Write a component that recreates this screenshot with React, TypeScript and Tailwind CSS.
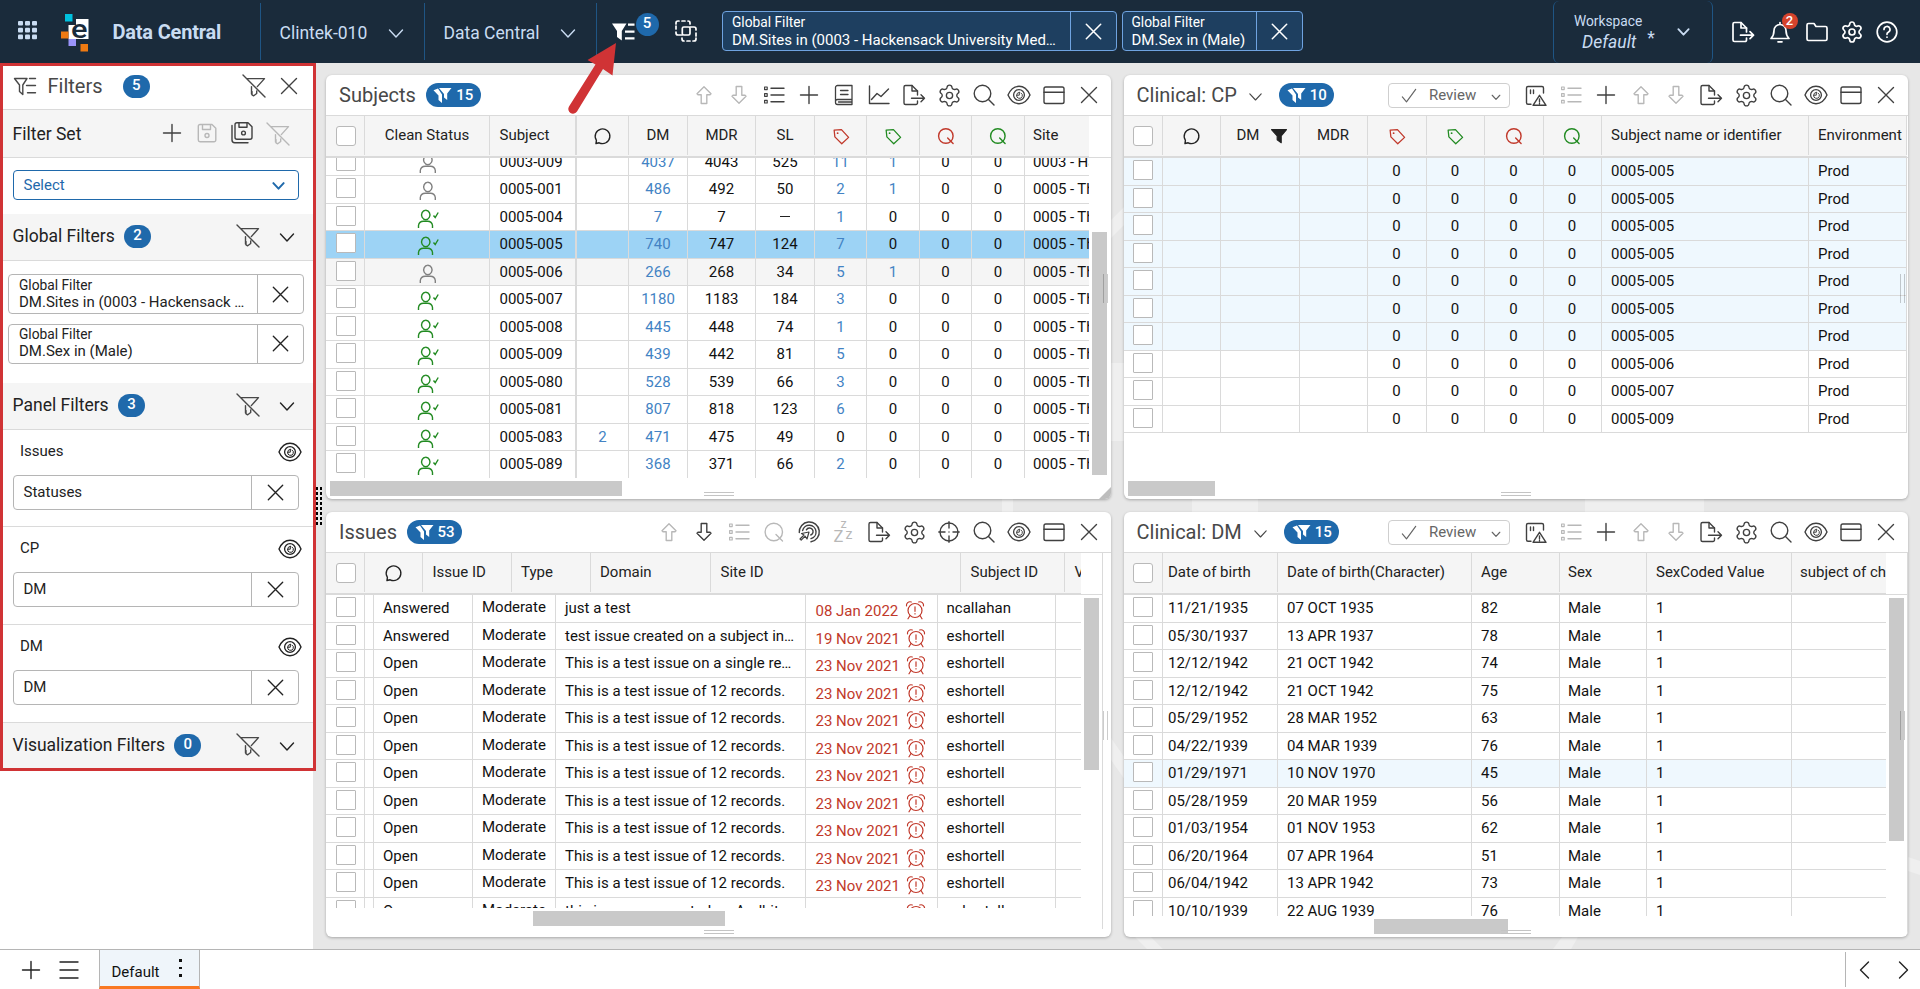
import type { ReactNode } from "react";
import clsx from "clsx";
import { Settings } from "lucide-react";

type IconProps = { className?: string; size?: number; stroke?: number; box?: string; children?: ReactNode };

function Icon({ className, size = 24, stroke = 1.4, box = "0 0 24 24", children }: IconProps) {
  return (
    <svg
      width={size}
      height={size}
      viewBox={box}
      fill="none"
      stroke="currentColor"
      strokeWidth={stroke}
      strokeLinecap="round"
      strokeLinejoin="round"
      className={clsx("shrink-0", className)}
    >
      {children}
    </svg>
  );
}

const CloseIcon = (p: IconProps) => (
  <Icon {...p}>
    <path d="M4.5 4.500l15 15M19.500 4.500l-15 15" />
  </Icon>
);
const PlusIcon = (p: IconProps) => (
  <Icon {...p}>
    <path d="M12 3.500v17M3.500 12h17" />
  </Icon>
);
const ChevronDown = (p: IconProps) => (
  <Icon {...p}>
    <path d="M5.500 9l6.500 7 6.500-7" />
  </Icon>
);
const UpIcon = (p: IconProps) => (
  <Icon {...p}>
    <path d="M12 3.700l7 7-1 1h-3.200v8.800H9.200v-8.800H6l-1-1z" />
  </Icon>
);
const DownIcon = (p: IconProps) => (
  <Icon {...p}>
    <path d="M12 20.300l7-7-1-1h-3.200V3.500H9.200v8.800H6l-1 1z" />
  </Icon>
);
const ListIcon = (p: IconProps) => (
  <Icon {...p}>
    <path d="M9 5.300h13M9 12h13M9 18.700h13" />
    <path d="M2.600 4h2.600v2.600H2.600zM2.600 10.700h2.600v2.600H2.600zM2.600 17.400h2.600V20H2.600z" strokeWidth="1.200" />
  </Icon>
);
const BookIcon = (p: IconProps) => (
  <Icon {...p}>
    <path d="M20 16.500V2.500H5.500a2 2 0 0 0-2 2v15a2 2 0 0 0 2 2H20v-5H5.500a2 2 0 0 0-2 2M8.500 7.500H16M8.500 11.500H16M6.500 19h13" strokeWidth="1.300" />
  </Icon>
);
const ChartIcon = (p: IconProps) => (
  <Icon {...p}>
    <path d="M2.500 3v17.500H22M4.500 16.500l5.500-6 4 3 7.500-7.500" />
  </Icon>
);
const ExportIcon = (p: IconProps) => (
  <Icon {...p}>
    <path d="M15.500 18v2a1.500 1.500 0 0 1-1.500 1.500H3.500A1.500 1.500 0 0 1 2 20V4a1.500 1.500 0 0 1 1.500-1.500H10l5.500 5.500v4" />
    <path d="M10 2.500V8h5.500M9.500 15.200H22.500M19 11.700l3.500 3.500-3.500 3.500" />
  </Icon>
);
const SearchIcon = (p: IconProps) => (
  <Icon {...p}>
    <circle cx="10.500" cy="10.500" r="8.300" />
    <path d="M16.500 16.500l5.500 5.500" />
  </Icon>
);
const EyeIcon = (p: IconProps) => (
  <Icon {...p}>
    <path d="M1 12c2-4.500 5.500-8.700 11-8.700S21 7.500 23 12c-2 4.500-5.500 8.700-11 8.700S3 16.500 1 12z" />
    <circle cx="12" cy="12" r="5.400" strokeWidth="1.300" />
    <path d="M12.300 9.300v2.900H9.600a2.900 2.900 0 1 0 4.400-2.200M9.600 12.200a2.900 2.900 0 0 1 2.700-2.900" strokeWidth="1" />
  </Icon>
);
const CardIcon = (p: IconProps) => (
  <Icon {...p}>
    <rect x="2" y="4" width="20" height="16.500" rx="1.800" />
    <path d="M2 9.300h20" />
  </Icon>
);
const QueryIcon = (p: IconProps) => (
  <Icon {...p}>
    <circle cx="11.800" cy="12" r="8.700" />
    <path d="M14 14.500l6.500 6.500" />
  </Icon>
);
const RetargetIcon = (p: IconProps) => (
  <Icon {...p}>
    <path d="M2.300 12.500A10 10 0 1 1 14 21.800M5.600 10.500A6.800 6.800 0 1 1 14 18.600M9.400 9.800A3.600 3.600 0 1 1 13.800 15" />
    <path d="M12 12l-2 7-1.800-2.800-4 4-1.200-1.200 4-4-2.500-1.500z" strokeWidth="1.200" />
  </Icon>
);
const CrosshairIcon = (p: IconProps) => (
  <Icon {...p}>
    <circle cx="12" cy="12" r="9" />
    <path d="M12 1.800V8M12 16v6.200M1.800 12H8M16 12h6.200M12 11.900v.2" />
  </Icon>
);
const SnoozeIcon = (p: IconProps) => (
  <Icon {...p}>
    <g fill="currentColor" stroke="none">
      <text x="8.500" y="8.200" fontSize="12.500">z</text>
      <text x="1.500" y="21.500" fontSize="16.500">Z</text>
      <text x="13.500" y="18.500" fontSize="14">z</text>
    </g>
  </Icon>
);
const WarnNoteIcon = (p: IconProps) => (
  <Icon {...p}>
    <path d="M7 21.300H4A1.500 1.500 0 0 1 2.500 19.800V5A1.500 1.500 0 0 1 4 3.500h14A1.500 1.500 0 0 1 19.500 5v5M6.500 7v3.500M9.500 7v3.500" />
    <path d="M15.500 12.300L22 22.300H9z M15.500 16v3M15.500 20.500v.2" />
  </Icon>
);
const FilterOffIcon = (p: IconProps) => (
  <Icon {...p}>
    <path d="M1 1l22 22M5 4.600h17.500l-7.200 8M9.500 12.600v7.400M14.700 17v2.500l-3 2.300-1.700-1v-3.300" />
  </Icon>
);
const FilterListIcon = (p: IconProps) => (
  <Icon {...p}>
    <path d="M1.500 4.500h12.500L9.800 11v9.500l-3.300-3V11zM16.500 4.500H22.500M13.500 11.500h9M14.500 18.800h8" />
  </Icon>
);
const SaveIcon = (p: IconProps) => (
  <Icon {...p}>
    <path d="M5 3.500h12l3.800 3.800V19A1.700 1.700 0 0 1 19 20.700H5A1.700 1.700 0 0 1 3.300 19V5.200A1.700 1.700 0 0 1 5 3.500zM7.500 3.700V8.500h8V3.700" />
    <circle cx="12" cy="14.500" r="2" />
  </Icon>
);
const SaveCopyIcon = (p: IconProps) => (
  <Icon {...p}>
    <path d="M7 1.800h11l4 4v10.500a2 2 0 0 1-2 2H7a2 2 0 0 1-2-2V3.800a2 2 0 0 1 2-2zM9 2v4.300h8V2M2 4.500v14.500a2.700 2.700 0 0 0 2.700 2.700H18" />
    <circle cx="13.500" cy="12" r="1.900" />
  </Icon>
);
const CommentIcon = (p: IconProps) => (
  <Icon {...p}>
    <path d="M5.400 20.200l.5-3.500a8 8 0 1 1 3 2.700z" />
  </Icon>
);
const TagIcon = (p: IconProps) => (
  <Icon {...p}>
    <path d="M4.500 5.500l.8 7.500 7.500 7.500 7.500-7L12.500 5z" />
    <path d="M8.300 8.800v.1" strokeWidth="2" />
  </Icon>
);
const SolidFunnel = (p: IconProps) => (
  <Icon {...p}>
    <path d="M2 3.500h20l-7 8.500v9l-5.500-4V12z" fill="currentColor" />
  </Icon>
);
const DoubleFunnel = () => (
  <svg width="19" height="17" viewBox="0 0 19 17" fill="currentColor" className="shrink-0">
    <path d="M0.500 3.300L5 1.500l4 6V16L5.500 13V8.500z" />
    <path d="M6 1h12.500l-4.300 5.500V13L11 10.500V7z" />
  </svg>
);
const AlarmIcon = () => (
  <Icon size={20} box="0 0 20 20" className="text-[#c1392b]" stroke={1.2}>
    <circle cx="10" cy="10.500" r="7" />
    <path d="M10 6.800v4.500M10 13.600v.3M5 15.500L3 18.800M15 15.500l2 3.300M1.500 5.800C1 3.500 3.500 1 6.300 2M18.500 5.800C19 3.500 16.500 1 13.700 2" />
  </Icon>
);
const PersonIcon = ({ clean }: { clean?: boolean }) => (
  <svg
    width="22"
    height="20"
    viewBox="0 0 22 20"
    fill="none"
    stroke="currentColor"
    strokeWidth="1.400"
    className={clean ? "ml-0.5 mt-1 text-[#228b22]" : "ml-0.5 mt-1 text-[#808080]"}
  >
    {clean ? (
      <path d="M1.500 19v-2.500a5 5 0 0 1 5-4.300h4a5 5 0 0 1 5 4.300V19M8.700 1.200a4.200 4.700 0 1 0 .1 0M16.500 6.500l1.700 2 3-5" />
    ) : (
      <path d="M3.300 19v-2.500a5 5 0 0 1 5-4.300h5a5 5 0 0 1 5 4.300V19M10.800 1.200a4.200 4.700 0 1 0 .1 0" />
    )}
  </svg>
);

const CountPill = ({ value }: { value: number }) => (
  <span className="flex h-[23.500px] w-[55px] items-center justify-center gap-1 rounded-full bg-[#1f69ab] text-[15px] font-medium text-white">
    <DoubleFunnel />
    {value}
  </span>
);

const Badge = ({ value, className }: { value: number; className?: string }) => (
  <span
    className={clsx(
      "flex h-[23px] w-[27.500px] items-center justify-center rounded-full bg-[#1f69ab] pb-px text-[15px] font-medium text-white",
      className,
    )}
  >
    {value}
  </span>
);

const Checkbox = ({ header }: { header?: boolean }) => (
  <span className={clsx("size-5 border border-[#b9b9b9] bg-white", header ? "rounded-[3px]" : "mb-0.5 rounded-[1px]")} />
);

type Column = { w: string; align?: "left"; pad?: string; thick?: boolean };

function Cell({ col, header, children }: { col: Column; header?: boolean; children?: ReactNode }) {
  return (
    <div
      className={clsx(
        "flex h-full shrink-0 items-center overflow-hidden whitespace-nowrap border-[#dadada]",
        col.w,
        col.thick ? "border-r-2" : "border-r",
        col.align === "left" ? clsx("justify-start", col.pad ?? "pl-[9.500px]") : "justify-center",
        header && "text-[#222]",
      )}
    >
      {children}
    </div>
  );
}

function HeaderRow({ cols, labels, width }: { cols: Column[]; labels: ReactNode[]; width: string }) {
  return (
    <div className="flex h-[42px] shrink-0">
      <div className={clsx("flex shrink-0 overflow-hidden border-b-2 border-[#dadada] bg-[#f5f5f5] pb-px", width)}>
        {cols.map((col, i) => (
          <Cell key={i} col={col} header>
            {i === 0 ? <Checkbox header /> : labels[i - 1]}
          </Cell>
        ))}
      </div>
      <div className="grow border-b border-[#dadada]" />
    </div>
  );
}

function Row({ cols, cells, className }: { cols: Column[]; cells: ReactNode[]; className?: string }) {
  return (
    <div className={clsx("flex h-[27.500px] w-max items-center border-b border-[#dadada]", className)}>
      {cols.map((col, i) => (
        <Cell key={i} col={col}>
          {i === 0 ? <Checkbox /> : cells[i - 1]}
        </Cell>
      ))}
    </div>
  );
}

const tools: Record<string, (p: IconProps) => ReactNode> = {
  up: UpIcon,
  down: DownIcon,
  list: ListIcon,
  plus: PlusIcon,
  book: BookIcon,
  chart: ChartIcon,
  export: ExportIcon,
  gear: (p) => <Settings size={25} strokeWidth={1.3} className={p.className} />,
  search: SearchIcon,
  eye: EyeIcon,
  card: CardIcon,
  close: CloseIcon,
  query: QueryIcon,
  retarget: RetargetIcon,
  snooze: SnoozeIcon,
  target: CrosshairIcon,
  warn: WarnNoteIcon,
};

type PanelProps = {
  title: string;
  count: number;
  icons: string[];
  dropdown?: boolean;
  className: string;
  children: ReactNode;
};

// A leading "-" marks a disabled tool.
function Panel({ title, count, icons, dropdown, className, children }: PanelProps) {
  return (
    <section className={clsx("relative flex flex-col overflow-hidden rounded-md bg-white shadow-[0_1px_3px_rgba(0,0,0,0.28)]", className)}>
      <div className="flex h-[41px] shrink-0 items-center border-b border-[#dadada] pl-[13px]">
        <h2 className="text-[20px] text-[#484848]">{title}</h2>
        {dropdown && <ChevronDown size={21} className="ml-2 mt-0.5 text-[#484848]" stroke={1.3} />}
        <div className={dropdown ? "ml-[13.500px]" : "ml-2.5"}>
          <CountPill value={count} />
        </div>
        <div className={clsx("ml-auto flex items-center", dropdown ? "pr-[4px]" : "pr-[4.500px]")}>
          {dropdown && (
            <div className="mr-[8.500px] flex h-[25px] w-[122px] items-center rounded border border-[#cfcfcf] text-[15px] text-[#666]">
              <Icon size={20} className="ml-2.5 mt-0.5 text-[#666]">
                <path d="M4 13l5 6L20 4" />
              </Icon>
              <span className="ml-2.5 grow">Review</span>
              <ChevronDown size={14} stroke={2} className="mr-1.5 mt-1" />
            </div>
          )}
          {icons.map((name) => {
            const off = name.startsWith("-");
            const Tool = tools[name.replace("-", "")];
            return (
              <span key={name} className="flex w-[35px] justify-center">
                <Tool className={off ? "text-[#b8b8b8]" : "text-[#404040]"} />
              </span>
            );
          })}
        </div>
      </div>
      {children}
      <span className="absolute bottom-[3px] left-[377.500px] h-[4.500px] w-[30px] border-y border-[#c4c4c4]" />
      <span className="absolute right-[3px] top-[199px] h-[29px] w-[5px] border-x border-black/20" />
    </section>
  );
}

const redTag = <TagIcon size={22} className="text-[#c1392b]" />;
const greenTag = <TagIcon size={22} className="text-[#228b22]" />;
const redQ = <QueryIcon size={20} className="text-[#c1392b]" stroke={1.7} />;
const greenQ = <QueryIcon size={20} className="text-[#228b22]" stroke={1.7} />;
const comment = <CommentIcon size={22} className="-ml-px" stroke={1.5} />;

const subjectCols: Column[] = [
  { w: "w-[39px] pl-0.5" },
  { w: "w-[125px]" },
  { w: "w-[87px]", align: "left", thick: true },
  { w: "w-[52px]" },
  { w: "w-[59px]" },
  { w: "w-[68px]" },
  { w: "w-[59px]" },
  { w: "w-[52px]" },
  { w: "w-[53px]" },
  { w: "w-[52px]" },
  { w: "w-[53px]" },
  { w: "w-[90px]", align: "left", pad: "pl-[8px]" },
];

const subjects: [string, boolean, string, string, string, string, string, string, string][] = [
  ["0003-009", false, "", "4037", "4043", "525", "11", "1", "0003 - Hack"],
  ["0005-001", false, "", "486", "492", "50", "2", "1", "0005 - The"],
  ["0005-004", true, "", "7", "7", "–", "1", "0", "0005 - The"],
  ["0005-005", true, "", "740", "747", "124", "7", "0", "0005 - The"],
  ["0005-006", false, "", "266", "268", "34", "5", "1", "0005 - The"],
  ["0005-007", true, "", "1180", "1183", "184", "3", "0", "0005 - The"],
  ["0005-008", true, "", "445", "448", "74", "1", "0", "0005 - The"],
  ["0005-009", true, "", "439", "442", "81", "5", "0", "0005 - The"],
  ["0005-080", true, "", "528", "539", "66", "3", "0", "0005 - The"],
  ["0005-081", true, "", "807", "818", "123", "6", "0", "0005 - The"],
  ["0005-083", true, "2", "471", "475", "49", "0", "0", "0005 - The"],
  ["0005-089", true, "", "368", "371", "66", "2", "0", "0005 - The"],
];

const Count = ({ value }: { value: string }) => (
  <span className={value === "0" ? undefined : "text-[#4383c4]"}>{value}</span>
);

function SubjectsPanel() {
  return (
    <Panel
      title="Subjects"
      count={15}
      className="h-[424px] w-[785px]"
      icons={["-up", "-down", "list", "plus", "book", "chart", "export", "gear", "search", "eye", "card", "close"]}
    >
      <HeaderRow
        cols={subjectCols}
        width="w-[763px]"
        labels={["Clean Status", "Subject", comment, "DM", "MDR", "SL", redTag, greenTag, redQ, greenQ, "Site"]}
      />
      <div className="flex h-[320px] shrink-0">
        <div className="w-[763px] shrink-0 overflow-hidden">
          <div className="-mt-[9.500px]">
            {subjects.map(([id, clean, notes, dm, mdr, sl, red, green, site], i) => (
              <Row
                key={id}
                cols={subjectCols}
                className={clsx(i === 3 && "bg-[#9dd3f5]", i === 4 && "bg-[#f5f5f5]")}
                cells={[
                  <PersonIcon clean={clean} />,
                  id,
                  <Count value={notes} />,
                  <Count value={dm} />,
                  mdr,
                  sl === "–" ? <span className="h-px w-2.5 bg-[#222]" /> : sl,
                  <Count value={red} />,
                  <Count value={green} />,
                  "0",
                  "0",
                  <span className="tracking-[-0.1px]">{site}</span>,
                ]}
              />
            ))}
          </div>
        </div>
        <div className="ml-[3px] mt-[74px] h-[243px] w-[15px] bg-[#c9c9c9]" />
      </div>
      <div className="ml-1 mt-[3px] h-[15px] w-[292px] shrink-0 bg-[#c9c9c9]" />
      <svg width="12" height="12" className="absolute bottom-0 right-0 text-[#bdbdbd]">
        <path d="M12 0V12H0z" fill="currentColor" />
      </svg>
    </Panel>
  );
}

const cpCols: Column[] = [
  { w: "w-[39px]" },
  { w: "w-[58px]" },
  { w: "w-[79px]" },
  { w: "w-[68px]" },
  { w: "w-[59px]" },
  { w: "w-[58px]" },
  { w: "w-[59px]" },
  { w: "w-[58px]" },
  { w: "w-[207px]", align: "left" },
  { w: "w-[98px]", align: "left" },
];

const cpSubjects = [
  ...Array(7).fill("0005-005"),
  "0005-006",
  "0005-007",
  "0005-009",
];

const clinicalIcons = ["warn", "-list", "plus", "-up", "-down", "export", "gear", "search", "eye", "card", "close"];

function CpPanel() {
  return (
    <Panel title="Clinical: CP" count={10} dropdown className="h-[424px] w-[784px]" icons={clinicalIcons}>
      <HeaderRow
        cols={cpCols}
        width="w-[783px]"
        labels={[
          comment,
          <span className="ml-1.5 flex items-center gap-[11px]">
            DM <SolidFunnel size={18} />
          </span>,
          "MDR",
          redTag,
          greenTag,
          redQ,
          greenQ,
          "Subject name or identifier",
          "Environment",
        ]}
      />
      <div className="h-[320px] w-[783px] shrink-0 overflow-hidden">
        {cpSubjects.map((id, i) => (
          <Row
            key={i}
            cols={cpCols}
            className={i < 7 ? "bg-[#eff8fe]" : undefined}
            cells={["", "", "", "0", "0", "0", "0", id, "Prod"]}
          />
        ))}
      </div>
      <div className="ml-1 mt-[3px] h-[15px] w-[87px] shrink-0 bg-[#c9c9c9]" />
    </Panel>
  );
}

const issueHeadCols: Column[] = [
  { w: "w-[39px] pl-0.5" },
  { w: "w-[58px]" },
  { w: "w-[89px]", align: "left" },
  { w: "w-[79px]", align: "left", pad: "pl-[9px]" },
  { w: "w-[120px]", align: "left", pad: "pl-[9px]" },
  { w: "w-[250px]", align: "left" },
  { w: "w-[104px]", align: "left" },
  { w: "w-[60px]", align: "left" },
];

const issueCols: Column[] = [
  { w: "w-[39px] pl-0.5" },
  { w: "w-[9px]" },
  { w: "w-[99px]", align: "left", pad: "pl-[9px]" },
  { w: "w-[83px]", align: "left", pad: "pl-[9px]" },
  { w: "w-[250px]", align: "left", pad: "pl-[9px]" },
  { w: "w-[132px]", align: "left" },
  { w: "w-[118px]", align: "left", pad: "pl-[8.500px]" },
  { w: "w-[60px]" },
];

const recordIssue = ["Open", "This is a test issue of 12 records.", "23 Nov 2021", "eshortell"];

const issues = [
  ["Answered", "just a test", "08 Jan 2022", "ncallahan"],
  ["Answered", "test issue created on a subject in…", "19 Nov 2021", "eshortell"],
  ["Open", "This is a test issue on a single re…", "23 Nov 2021", "eshortell"],
  ...Array(8).fill(recordIssue),
  ["Open", "this is a query created on Andhita", "", "eshortell"],
];

function IssuesPanel() {
  return (
    <Panel
      title="Issues"
      count={53}
      className="h-[425px] w-[785px]"
      icons={["-up", "down", "-list", "-query", "retarget", "-snooze", "export", "gear", "target", "search", "eye", "card", "close"]}
    >
      <div className="flex h-[376px] w-[777px] shrink-0 flex-col border-r border-[#dadada]">
        <HeaderRow
          cols={issueHeadCols}
          width="w-[755px]"
          labels={[comment, "Issue ID", "Type", "Domain", "Site ID", "Subject ID", "Visit"]}
        />
        <div className="flex h-[313px] shrink-0">
          <div className="w-[755px] shrink-0 overflow-hidden">
            {issues.map(([status, text, date, user], i) => (
              <Row
                key={i}
                cols={issueCols}
                cells={[
                  "",
                  status,
                  <span className="pb-0.5">Moderate</span>,
                  text,
                  <span className="flex items-center pt-[6px] text-[#c1392b]">
                    <span className="w-[83px]">{date}</span>
                    <span className={clsx("-mt-0.5", i === 0 ? "ml-[6px]" : "ml-[7.500px]")}>
                      <AlarmIcon />
                    </span>
                  </span>,
                  user,
                  "",
                ]}
              />
            ))}
          </div>
          <div className="ml-[3px] mt-[3px] h-[172px] w-[15px] bg-[#c9c9c9]" />
        </div>
        <div className="ml-[207px] mt-[3px] h-[15px] w-[192px] shrink-0 bg-[#c9c9c9]" />
      </div>
    </Panel>
  );
}

const dmCols: Column[] = [
  { w: "w-[39px]" },
  { w: "w-[115px]", align: "left", pad: "pl-[5.500px]" },
  { w: "w-[194px]", align: "left" },
  { w: "w-[88px]", align: "left" },
  { w: "w-[87px]", align: "left", pad: "pl-[8.500px]" },
  { w: "w-[145px]", align: "left" },
  { w: "w-[130px]", align: "left", pad: "pl-[8.500px]" },
];

const demographics = [
  ["11/21/1935", "07 OCT 1935", "82"],
  ["05/30/1937", "13 APR 1937", "78"],
  ["12/12/1942", "21 OCT 1942", "74"],
  ["12/12/1942", "21 OCT 1942", "75"],
  ["05/29/1952", "28 MAR 1952", "63"],
  ["04/22/1939", "04 MAR 1939", "76"],
  ["01/29/1971", "10 NOV 1970", "45"],
  ["05/28/1959", "20 MAR 1959", "56"],
  ["01/03/1954", "01 NOV 1953", "62"],
  ["06/20/1964", "07 APR 1964", "51"],
  ["06/04/1942", "13 APR 1942", "73"],
  ["10/10/1939", "22 AUG 1939", "76"],
];

function DmPanel() {
  return (
    <Panel title="Clinical: DM" count={15} dropdown className="h-[425px] w-[784px]" icons={clinicalIcons}>
      <div className="flex w-[784px] shrink-0 flex-col border-r border-[#dadada]">
        <HeaderRow
          cols={dmCols}
          width="w-[762px]"
          labels={["Date of birth", "Date of birth(Character)", "Age", "Sex", "SexCoded Value", "subject of change"]}
        />
        <div className="flex h-[321px] shrink-0">
          <div className="w-[762px] shrink-0 overflow-hidden">
            {demographics.map(([birth, text, age], i) => (
              <Row
                key={i}
                cols={dmCols}
                className={i === 6 ? "bg-[#eff8fe]" : undefined}
                cells={[birth, text, age, "Male", "1", ""]}
              />
            ))}
          </div>
          <div className="ml-[3px] mt-[3px] h-[243px] w-[15px] bg-[#c9c9c9]" />
        </div>
        <div className="ml-[250px] mt-[3px] h-[15px] w-[134px] shrink-0 bg-[#c9c9c9]" />
      </div>
    </Panel>
  );
}

function HeaderChip({ text, width }: { text: string; width: string }) {
  return (
    <div className="flex h-10 rounded border border-[#6fa3e0] bg-[#1e3f60] text-white">
      <div className={clsx("flex flex-col justify-center border-r border-[#6fa3e0] pl-[9px]", width)}>
        <span className="text-[13.750px] leading-[17px]">Global Filter</span>
        <span className="whitespace-nowrap text-[15px] leading-[18px]">{text}</span>
      </div>
      <span className="flex w-[45px] items-center justify-center">
        <CloseIcon size={23} stroke={1.600} />
      </span>
    </div>
  );
}

function TopBar() {
  return (
    <header className="flex h-[63px] shrink-0 items-center bg-[#1a2b3b] text-[#c9dcf2]">
      <div className="flex h-[57px] w-[261px] items-center border-r border-[#1f5584]">
        <svg width="20" height="19" viewBox="0 0 20 19" fill="currentColor" className="mb-0.5 ml-[17.500px]">
          {[0, 6.800, 13.600].map((y) =>
            [0, 7, 14].map((x) => <rect key={`${x}-${y}`} x={x} y={y} width="5" height="4.600" rx="1" />),
          )}
        </svg>
        <svg width="29" height="38" viewBox="0 0 29 38" className="ml-[23px] mt-0.5 overflow-visible">
          <path d="M4 0h7.500v7.500H4z" fill="#00c1de" />
          <path d="M15 5h12.500v20H7.500V11H15z" fill="#fff" />
          <path d="M0 17.500h7.500v7H0z" fill="#ef7a12" />
          <path d="M7.500 25H15v7H7.500z" fill="#9a94fa" />
          <path d="M19.500 30H27v7.500h-7.500z" fill="#ef7a12" />
          <text x="10" y="23.500" fontSize="26" fontWeight="500" fill="#1a2b3b" textLength="16.500" lengthAdjust="spacingAndGlyphs">
            e
          </text>
        </svg>
        <h1 className="ml-[23px] mt-px whitespace-nowrap text-[20px] font-bold tracking-[-0.2px]">Data Central</h1>
      </div>
      <div className="flex h-[57px] w-[164px] items-center border-r border-[#1f5584] pl-[18.500px] pt-[3px] text-[17.500px]">
        <span className="grow">Clintek-010</span>
        <ChevronDown size={24} className="mb-px mr-[16.500px]" />
      </div>
      <div className="flex h-[57px] w-[172px] items-center border-r border-[#1f5584] pl-[18.500px] pt-[3px] text-[17.500px]">
        <span className="grow">Data Central</span>
        <ChevronDown size={24} className="mb-px mr-[16px]" />
      </div>
      <div className="relative ml-[14.500px] text-white">
        <svg width="24" height="20" viewBox="0 0 24 20" fill="currentColor">
          <path d="M0 1.500h14.500L9.800 9v9.500L5 15V9z" />
          <path d="M16 1.500h6.500v2.200H16zM13 8.500h9.500v2.200H13zM13 15.200h9.500v2.200H13z" />
        </svg>
        <Badge value={5} className="absolute -top-[9px] left-[24px] w-[23px]!" />
      </div>
      <Icon size={24} className="mb-0.5 ml-[38.500px] text-white" stroke={1.700}>
        <path d="M8 16H4a2 2 0 0 1-2-2v-1M2 10V7M2 5V4a2 2 0 0 1 2-2h1M8 2h3M14 2a2 2 0 0 1 2 2v1" />
        <path d="M16 8h4a2 2 0 0 1 2 2v1M22 14v3M22 19v1a2 2 0 0 1-2 2h-1M16 22h-3M10 22a2 2 0 0 1-2-2v-1" />
        <rect x="8.300" y="8" width="7.700" height="8" rx="1.500" />
      </Icon>
      <div className="mb-px ml-[24px] flex gap-[4.500px]">
        <HeaderChip text="DM.Sites in (0003 - Hackensack University Med…" width="w-[348px]" />
        <HeaderChip text="DM.Sex in (Male)" width="w-[134px]" />
      </div>
      <div className="ml-auto flex h-[62px] w-[160px] items-center rounded-md border-x border-[#1f5584] pl-5">
        <div className="pt-[3px]">
          <div className="text-[13.750px] leading-[18px]">Workspace</div>
          <div className="flex pl-2 text-[17.500px] italic leading-[25px]">
            Default<span className="ml-[11px] -mt-1 not-italic">*</span>
          </div>
        </div>
        <ChevronDown size={19} stroke={2.300} className="ml-auto mr-[19px]" />
      </div>
      <div className="ml-[18px] mr-[21px] flex items-center gap-[11px] text-white">
        <ExportIcon stroke={1.700} />
        <div className="relative ml-[2px]">
          <Icon stroke={1.700}>
            <path d="M3 18.500c2-2 3-4 3-8a6 6 0 0 1 12 0c0 4 1 6 3 8zM12 4.300V2.500M10 21.800h4" />
          </Icon>
          <span className="absolute -top-[7px] left-[13.500px] flex size-4 items-center justify-center rounded-full bg-[#d6432c] text-[13px] font-medium">
            2
          </span>
        </div>
        <Icon stroke={1.700} className="ml-[2px]">
          <path d="M2 5a1.500 1.500 0 0 1 1.500-1.500H9L11 6.500h9.500A1.500 1.500 0 0 1 22 8v11a1.500 1.500 0 0 1-1.500 1.500h-17A1.500 1.500 0 0 1 2 19z" />
        </Icon>
        <Settings size={24} strokeWidth={1.700} />
        <Icon stroke={1.700}>
          <circle cx="12" cy="12" r="9.800" />
          <path d="M9 9.500a3 3 0 1 1 4.300 2.700c-.9.500-1.300 1-1.300 1.800v.3M12 17v.2" />
        </Icon>
      </div>
    </header>
  );
}

function SideChip({ text }: { text: string }) {
  return (
    <div className="ml-2 flex h-10 w-[296px] rounded border border-[#b5b5b5]">
      <div className="flex w-[249px] flex-col justify-center border-r border-[#b5b5b5] pb-px pl-2.5 text-[#222]">
        <span className="text-[13.750px] leading-[17px]">Global Filter</span>
        <span className="whitespace-nowrap text-[15px] leading-[17px]">{text}</span>
      </div>
      <span className="flex w-[45px] items-center justify-center">
        <CloseIcon size={23} />
      </span>
    </div>
  );
}

function SectionTitle({ title, count, className }: { title: string; count: number; className?: string }) {
  return (
    <div className={clsx("flex shrink-0 items-center bg-[#f5f5f5] pl-[12.500px] pr-[14.500px]", className)}>
      <span className="text-[17.500px]">{title}</span>
      <Badge value={count} className="ml-[9px]" />
      <FilterOffIcon size={24} className="ml-auto text-[#484848]" />
      <ChevronDown size={24} className="ml-[14.500px] mt-px" />
    </div>
  );
}

function PanelFilter({ label, value, className }: { label: string; value: string; className: string }) {
  return (
    <div className={clsx("shrink-0 border-b border-[#dadada] pr-[13px]", className)}>
      <div className="flex h-[44.500px] items-center justify-between pl-5 text-[15px]">
        <span className="pb-[3px]">{label}</span>
        <EyeIcon size={24} className="-mr-0.5 mb-px" />
      </div>
      <div className="ml-[13px] flex h-[35px] w-[286px] rounded border border-[#b5b5b5] text-[15px]">
        <span className="flex w-[239px] items-center border-r border-[#b5b5b5] pl-[9.500px]">{value}</span>
        <span className="flex w-[46px] items-center justify-center">
          <CloseIcon size={23} />
        </span>
      </div>
    </div>
  );
}

function Sidebar() {
  return (
    <aside className="relative flex w-[313px] shrink-0 flex-col bg-white text-[#222]">
      <div className="flex h-[47px] shrink-0 items-center border-b border-[#dadada] pl-[13px] pr-[12px]">
        <FilterListIcon size={24} className="text-[#484848]" />
        <span className="ml-[10.500px] text-[20px] text-[#484848]">Filters</span>
        <Badge value={5} className="ml-[20px]" />
        <FilterOffIcon size={24} className="ml-auto text-[#484848]" />
        <CloseIcon size={24} className="ml-[11px] text-[#404040]" />
      </div>
      <div className="flex h-12 shrink-0 items-center border-b border-[#dadada] bg-[#f5f5f5] pl-[12.500px] pr-[23px]">
        <span className="pt-px text-[17.500px]">Filter Set</span>
        <PlusIcon className="mb-0.5 ml-auto text-[#404040]" />
        <SaveIcon className="mb-0.5 ml-[11px] text-[#b8b8b8]" />
        <SaveCopyIcon className="mb-0.5 ml-[11px] text-[#404040]" />
        <FilterOffIcon className="ml-3 text-[#b8b8b8]" />
      </div>
      <div className="h-14 shrink-0 pl-[13px] pt-3">
        <div className="flex h-[30px] w-[286px] items-center justify-between rounded border border-[#1f69ab] pl-[9.500px] pr-2.5 text-[15px] text-[#1f69ab]">
          Select
          <ChevronDown size={19} stroke={2.500} />
        </div>
      </div>
      <SectionTitle title="Global Filters" count={2} className="h-[47px] border-b border-[#dadada] pb-0.5" />
      <div className="flex h-[122px] shrink-0 flex-col gap-[9.500px] pt-[13px]">
        <SideChip text="DM.Sites in (0003 - Hackensack …" />
        <SideChip text="DM.Sex in (Male)" />
      </div>
      <SectionTitle title="Panel Filters" count={3} className="h-[47px] border-b border-[#dadada] pb-0.5" />
      <PanelFilter label="Issues" value="Statuses" className="h-[97px]" />
      <PanelFilter label="CP" value="DM" className="h-[98px]" />
      <PanelFilter label="DM" value="DM" className="h-[98px]" />
      <SectionTitle title="Visualization Filters" count={0} className="h-[46px] pb-0.5" />
      <div className="absolute left-0 top-0 h-[708px] w-[316px] border-[3px] border-[#d03335]" />
    </aside>
  );
}

function BottomBar() {
  return (
    <footer className="flex h-10 shrink-0 border-t border-[#b5b5b5] bg-white text-[#222]">
      <div className="flex w-[99px] items-center gap-[13.500px] pl-[19px]">
        <PlusIcon />
        <Icon>
          <path d="M3 4h18M3 12h18M3 20h18" />
        </Icon>
      </div>
      <div className="flex w-[101px] items-center border-x border-b-[3px] border-x-[#b5b5b5] border-b-[#f97822] bg-[#eff5fa] pl-[11.500px] pt-2 text-[15px] text-[#111]">
        Default
        <span className="mb-2 ml-auto mr-[17.500px] flex flex-col gap-[5px]">
          <i className="size-[2.500px] bg-[#111]" />
          <i className="size-[2.500px] bg-[#111]" />
          <i className="size-[2.500px] bg-[#111]" />
        </span>
      </div>
      <div className="my-0.5 ml-auto flex w-[75px] items-center gap-[14px] border-l border-[#b5b5b5] pl-[6.500px]">
        <Icon>
          <path d="M15.500 4l-8 8 8 8" />
        </Icon>
        <Icon>
          <path d="M8.500 4l8 8-8 8" />
        </Icon>
      </div>
    </footer>
  );
}

export default function App() {
  return (
    <div className="relative flex h-[989px] w-[1920px] flex-col overflow-hidden bg-[#e7e7e7] font-['Roboto',sans-serif] text-[15px] leading-normal text-[#111]">
      <TopBar />
      <div className="flex h-[886px] shrink-0">
        <Sidebar />
        <div className="flex w-[13px] items-center justify-end pr-1">
          <div className="grid grid-cols-2 gap-x-[1.500px] gap-y-[2.500px]">
            {Array.from({ length: 16 }, (_, i) => (
              <i key={i} className="size-[2.500px] bg-black" />
            ))}
          </div>
        </div>
        <main className="relative grid grid-cols-[785px_784px] grid-rows-[424px_425px] gap-x-[12.500px] gap-y-[13px] pt-3">
          {/* pale backdrop shapes showing through the gutters */}
          <svg width="1594" height="886" className="absolute left-0 top-0" fill="#efefef">
            <path d="M785 157l14-14v18l-14 14zM785 300h14v78h-14zM785 675l14 20v22l-14-20zM809 874h16l12 12h-16z" />
            <path d="M676 436h11v14h-11zM866 436h66v14h-66zM1259 436h119v14h-119zM1236 874h16l-7 12h-18zM1582 794l12 4v14l-12-4z" />
          </svg>
          <SubjectsPanel />
          <CpPanel />
          <IssuesPanel />
          <DmPanel />
        </main>
      </div>
      <BottomBar />
      {/* callout arrow pointing at the filter toggle */}
      <svg width="60" height="80" viewBox="0 0 60 80" className="absolute left-[564px] top-[38px]" fill="#d03335">
        <path d="M52 5L23.500 22l8 4.500L5 68.500a4.700 4.700 0 0 0 8 5L39 31l9.500 6.500z" />
      </svg>
    </div>
  );
}
